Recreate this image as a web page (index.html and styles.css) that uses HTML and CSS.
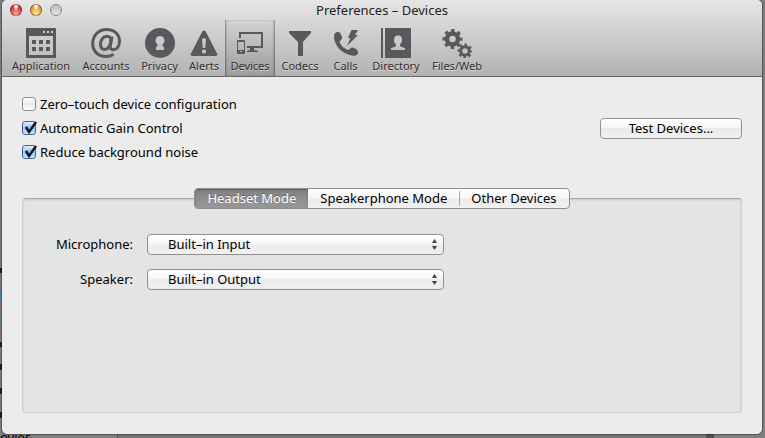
FILE: index.html
```html
<!DOCTYPE html>
<html lang="en">
<head>
<meta charset="utf-8">
<title>Preferences – Devices</title>
<link rel="stylesheet" href="styles.css">
</head>
<body>
<div class="backdrop" aria-hidden="true">ovies</div>
<div class="window">
  <header class="header">
    <div class="titlebar">
      <div class="lights">
        <button class="light close" type="button" aria-label="Close"></button>
        <button class="light minimize" type="button" aria-label="Minimize"></button>
        <button class="light zoom" type="button" aria-label="Zoom" disabled></button>
      </div>
      <h1 class="title">Preferences – Devices</h1>
    </div>
    <nav class="toolbar">
      <button class="tool" type="button">
        <svg class="icon" viewBox="0 0 30 30"><path fill-rule="evenodd" d="M0 0h30v30H0zM3 8v19h24V8zM17 3v2h2V3zM21 3v2h2V3zM25 3v2h2V3z"/><path d="M6 12h4v4H6zM13 12h4v4h-4zM20 12h4v4h-4zM6 19h4v4H6zM13 19h4v4h-4zM20 19h4v4h-4z"/></svg>
        <span>Application</span>
      </button>
      <button class="tool" type="button">
        <svg class="icon" viewBox="0 0 30 30"><g fill="none" stroke="currentColor" stroke-width="3"><path d="M22.5 26.2C20.300 27.800 17.800 28.500 15 28.500C7 28.500 1.700 23.200 1.700 15.500C1.700 7.500 7.500 1.500 15.700 1.500C23.300 1.500 28.500 6.400 28.500 13C28.500 18.400 25.800 21.700 22.300 21.700C19.800 21.700 19 20 19.400 17.800L21 8.500"/><path d="M19.800 13C20 9.700 18.500 8.200 16 8.200C12.200 8.200 9.500 12 9.500 16.300C9.500 19.600 11 21.400 13.500 21.400C16.700 21.400 19 18.600 19.800 13Z"/></g></svg>
        <span>Accounts</span>
      </button>
      <button class="tool" type="button">
        <svg class="icon" viewBox="0 0 30 30"><path fill-rule="evenodd" d="M15 0a15 15 0 1 0 0 30a15 15 0 1 0 0-30M15 8a4.500 4.500 0 0 1 2.500 8.200l.5 2.800h1v3h-8v-3h1l.5-2.800A4.500 4.500 0 0 1 15 8"/></svg>
        <span>Privacy</span>
      </button>
      <button class="tool" type="button">
        <svg class="icon" viewBox="0 0 30 30"><path fill-rule="evenodd" d="M15 2.500c.8 0 1.300.4 1.700 1.100L28 25.500c.8 1.500.2 2.500-1.300 2.500H3.300C1.800 28 1.200 27 2 25.500L13.300 3.600c.4-.7.9-1.100 1.700-1.100M13 11l.8 9h2.400l.8-9q-2-1.500-4 0M15 21.500a2.100 2.100 0 1 0 0 4.200a2.100 2.100 0 1 0 0-4.200"/></svg>
        <span>Alerts</span>
      </button>
      <button class="tool selected" type="button" aria-current="page">
        <svg class="icon" viewBox="0 0 30 30"><path fill-rule="evenodd" d="M4 4h24v16H12v-2h14V6H6v4H4zM3 12h6q1 0 1 1v12q0 1-1 1H3q-1 0-1-1V13q0-1 1-1M3 14v8h6v-8zM5 23v1h2v-1z"/><path d="M15 20h4v2l4 1v1H12v-1l3-1z"/></svg>
        <span>Devices</span>
      </button>
      <button class="tool" type="button">
        <svg class="icon" viewBox="0 0 30 30"><path d="M4 3h22v2l-8 9v14h-5V14L4 5z"/></svg>
        <span>Codecs</span>
      </button>
      <button class="tool" type="button">
        <svg class="icon" viewBox="0 0 30 30"><path d="M6 4C9 3 11 8 11 10C11 12 8 12 9 15C11 19 14 21 17 22C19 22 19 19.500 21 19.500C24 19.500 28 23 27 25C26 28 22 28.500 19 27C11 25 5 19 3.500 12C2.500 8 3 5 6 4M20.500 2h6.500l-3 5h3L16 18l3.500-8H17z"/></svg>
        <span>Calls</span>
      </button>
      <button class="tool" type="button">
        <svg class="icon" viewBox="0 0 30 30"><path fill-rule="evenodd" d="M0 0h2v30H0zM4 0h26v30H4zM17 7.500c-3 0-4 2-4 4.500 0 2 1 3.500 2 4.500v1.700l-5 2V22h14v-1.800l-5-2v-1.700c1-1 2-2.500 2-4.500 0-2.500-1-4.500-4-4.500"/></svg>
        <span>Directory</span>
      </button>
      <button class="tool" type="button">
        <svg class="icon" viewBox="0 0 30 30"><g fill="none" stroke="currentColor"><circle cx="10.500" cy="11" r="5.500" stroke-width="4.500"/><circle cx="10.500" cy="11" r="8.500" stroke-width="3" stroke-dasharray="3.338 3.338" stroke-dashoffset="1.669"/><circle cx="23" cy="23" r="4.300" stroke-width="3"/><circle cx="23" cy="23" r="6.300" stroke-width="2.400" stroke-dasharray="2.474 2.474" stroke-dashoffset="1.237"/></g></svg>
        <span>Files/Web</span>
      </button>
    </nav>
  </header>
  <main class="content">
    <div class="general">
      <div class="options">
        <div class="option"><span class="check"><input type="checkbox" id="zero"><svg viewBox="0 0 16 17"><path d="M4 9l3 5L14 4"/></svg></span><label for="zero">Zero–touch device configuration</label></div>
        <div class="option"><span class="check"><input type="checkbox" id="gain" checked><svg viewBox="0 0 16 17"><path d="M4 9l3 5L14 4"/></svg></span><label for="gain">Automatic Gain Control</label></div>
        <div class="option"><span class="check"><input type="checkbox" id="noise" checked><svg viewBox="0 0 16 17"><path d="M4 9l3 5L14 4"/></svg></span><label for="noise">Reduce background noise</label></div>
      </div>
      <button class="push" type="button">Test Devices...</button>
    </div>
    <section class="devices">
      <div class="tabs" role="tablist">
        <button class="tab" type="button" role="tab" aria-selected="true">Headset Mode</button>
        <button class="tab" type="button" role="tab" aria-selected="false">Speakerphone Mode</button>
        <button class="tab" type="button" role="tab" aria-selected="false">Other Devices</button>
      </div>
      <div class="panel" role="tabpanel">
        <label class="name" for="mic">Microphone:</label>
        <div class="popup"><select id="mic"><option>Built–in Input</option></select><svg viewBox="0 0 5 11"><path d="M0 4L2.500 0L5 4zM0 7h5L2.500 11z"/></svg></div>
        <label class="name" for="speaker">Speaker:</label>
        <div class="popup"><select id="speaker"><option>Built–in Output</option></select><svg viewBox="0 0 5 11"><path d="M0 4L2.500 0L5 4zM0 7h5L2.500 11z"/></svg></div>
      </div>
    </section>
  </main>
</div>
</body>
</html>
```
FILE: styles.css
```css
* { box-sizing: border-box; }

body {
  margin: 0;
  min-height: 100vh;
  padding: 0 3px 4px 2px;
  display: flex;
  overflow: hidden;
  font: 13px/16px "Noto Sans", "Open Sans", sans-serif;
  color: #000;
  background:
    linear-gradient(#411, #411) 0 268px / 2px 5px no-repeat,
    linear-gradient(#4c86ae, #4c86ae) 0 289px / 2px 10px no-repeat,
    linear-gradient(#4c86ae, #4c86ae) 0 315px / 2px 8px no-repeat,
    linear-gradient(#223, #223) 0 342px / 2px 5px no-repeat,
    linear-gradient(#223, #223) 0 364px / 2px 6px no-repeat,
    linear-gradient(#223, #223) 0 388px / 2px 6px no-repeat,
    linear-gradient(#223, #223) 0 412px / 2px 6px no-repeat,
    linear-gradient(90deg, #808080 0 117px, #555 117px 118px, #777 118px 706px, #505050 706px 714px, #808080 714px);
}

button, select, input { font: inherit; color: inherit; margin: 0; }
button { padding: 0; border: 0; background: none; }

.backdrop {
  position: absolute;
  left: 0;
  bottom: -7px;
  z-index: -1;
}

.window {
  flex: 1;
  display: flex;
  flex-direction: column;
  border-radius: 5px;
  overflow: hidden;
  background: #ececec;
  box-shadow: 0 0 1px 1px rgba(0, 0, 0, .35);
}

.header {
  background: linear-gradient(#e6e6e6, #b2b2b2);
  border-bottom: 1px solid #686868;
}

.titlebar {
  display: grid;
  grid-template-columns: 60px 1fr 60px;
  align-items: center;
  height: 20px;
}
.title { margin: 0; font-size: 13px; font-weight: 400; text-align: center; color: #222; }
.lights { display: flex; gap: 8px; padding-left: 8px; }
.light {
  width: 12px;
  height: 12px;
  border-radius: 50%;
  border: 1px solid #666;
  border-color: rgba(0, 0, 0, .4);
}
.close { background: radial-gradient(ellipse at 50% 10%, #fff 0 10%, transparent 40%), radial-gradient(circle at 50% 90%, #ffb0a5, #df3239 65%); }
.minimize { background: radial-gradient(ellipse at 50% 10%, #fff 0 10%, transparent 40%), radial-gradient(circle at 50% 90%, #fff09b, #e69a36 65%); }
.zoom { background: linear-gradient(#bbb, #e6e6e6); border-color: #888; }

.toolbar {
  display: grid;
  grid-template-columns: 70px 60px 47px 42px 50px 50px 41px 60px 62px;
  height: 56px;
  padding-left: 4px;
}
.tool {
  display: flex;
  flex-direction: column;
  align-items: center;
  padding-top: 8px;
  font-size: 11px;
  white-space: nowrap;
  color: #2d2d2d;
  text-shadow: 0 1px 0 rgba(255, 255, 255, .5);
}
.tool.selected {
  background: linear-gradient(rgba(0, 0, 0, .02), rgba(0, 0, 0, .12));
  box-shadow: inset 1px 0 rgba(0, 0, 0, .2), inset -1px 0 rgba(0, 0, 0, .2), inset 2px 0 2px rgba(0, 0, 0, .12), inset -2px 0 2px rgba(0, 0, 0, .12);
}
.icon { width: 30px; height: 30px; flex: none; fill: currentColor; color: #58595c; }

.content {
  flex: 1;
  display: flex;
  flex-direction: column;
  padding: 19px 20px 21px;
}

.general { display: flex; justify-content: space-between; align-items: center; }
.options { display: grid; gap: 8px; }
.option { display: flex; align-items: center; gap: 4px; }
.check { display: flex; position: relative; }
.check input {
  appearance: none;
  width: 14px;
  height: 14px;
  border: 1px solid #8c8c8c;
  border-radius: 3px;
  background: linear-gradient(#fff, #ececec 50%, #fff);
}
.check input:checked { border-color: #4d5f91; background: linear-gradient(#e7f3fd, #8fc0ee 50%, #c3efff); }
.check svg {
  position: absolute;
  left: 0;
  bottom: 0;
  width: 16px;
  height: 17px;
  display: none;
  fill: none;
  stroke: #101a30;
  stroke-width: 2.5;
  pointer-events: none;
}
.check input:checked + svg { display: block; }

.push {
  width: 142px;
  height: 21px;
  border: 1px solid #919191;
  border-radius: 4px;
  background: linear-gradient(#fff, #f5f5f5 50%, #eaeaea 50%, #f1f1f1);
}

.devices { flex: 1; display: flex; flex-direction: column; align-items: stretch; padding-top: 28px; }
.tabs {
  position: relative;
  align-self: center;
  display: flex;
  margin-bottom: -11px;
  border: 1px solid #8e8e8e;
  border-radius: 4px;
  background: linear-gradient(#fff, #f5f5f5 50%, #eaeaea 50%, #f1f1f1);
  overflow: hidden;
}
.tab { height: 19px; padding: 0 12px 2px; }
.tab[aria-selected="true"] {
  color: #fff;
  background: linear-gradient(#808080, #8c8c8c 40%, #989898);
  box-shadow: inset 0 1px 2px rgba(0, 0, 0, .3);
  text-shadow: 0 -1px 0 rgba(0, 0, 0, .3);
}
.tab + .tab + .tab { background: linear-gradient(#aaa, #aaa) 0 50% / 1px 15px no-repeat; }

.panel {
  flex: 1;
  display: grid;
  grid-template-columns: 110px minmax(0, 297px);
  grid-auto-rows: 21px;
  gap: 14px;
  align-items: center;
  padding-top: 35px;
  border: 1px solid #cdcdcd;
  border-top-color: #a9a9a9;
  border-radius: 4px;
  background: #e4e4e4;
  box-shadow: inset 0 1px 2px rgba(0, 0, 0, .12);
}
.name { text-align: right; padding-bottom: 2px; }
.popup { position: relative; }
.popup select {
  display: block;
  appearance: none;
  width: 100%;
  height: 21px;
  padding: 0 20px 2px;
  border: 1px solid #8f8f8f;
  border-radius: 4px;
  background: linear-gradient(#fff, #f5f5f5 50%, #eaeaea 50%, #f1f1f1);
}
.popup svg { position: absolute; right: 7px; top: 5px; width: 5px; height: 11px; fill: #444; pointer-events: none; }
```
